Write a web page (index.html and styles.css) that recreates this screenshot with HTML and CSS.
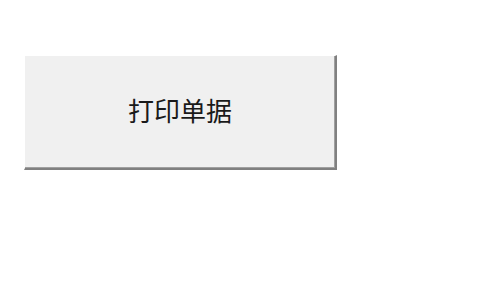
FILE: index.html
```html
<!DOCTYPE html>
<html>
<head>
<meta charset="utf-8">
<link rel="stylesheet" href="styles.css">
</head>
<body>
<div class="page">
  <button class="print-btn">打印单据</button>
</div>
</body>
</html>
```

FILE: styles.css
```css
html, body {
  margin: 0;
  padding: 0;
  background: #ffffff;
}
.page {
  width: 480px;
  height: 300px;
  padding: 55px 0 0 24px;
  box-sizing: border-box;
}
.print-btn {
  display: block;
  box-sizing: border-box;
  width: 313px;
  height: 115px;
  margin: 0;
  padding: 0 0 4px 0;
  background: #f0f0f0;
  border-style: solid;
  border-width: 1px 2px 2px 1px;
  border-color: #ffffff #808080 #808080 #ffffff;
  box-shadow: inset -1px -1px 0 #a0a0a0, inset 1px 1px 0 #f0f0f0;
  font-family: "Noto Sans CJK SC", sans-serif;
  font-size: 26px;
  font-weight: 400;
  color: #1a1a1a;
  line-height: 1;
  cursor: default;
}
```
